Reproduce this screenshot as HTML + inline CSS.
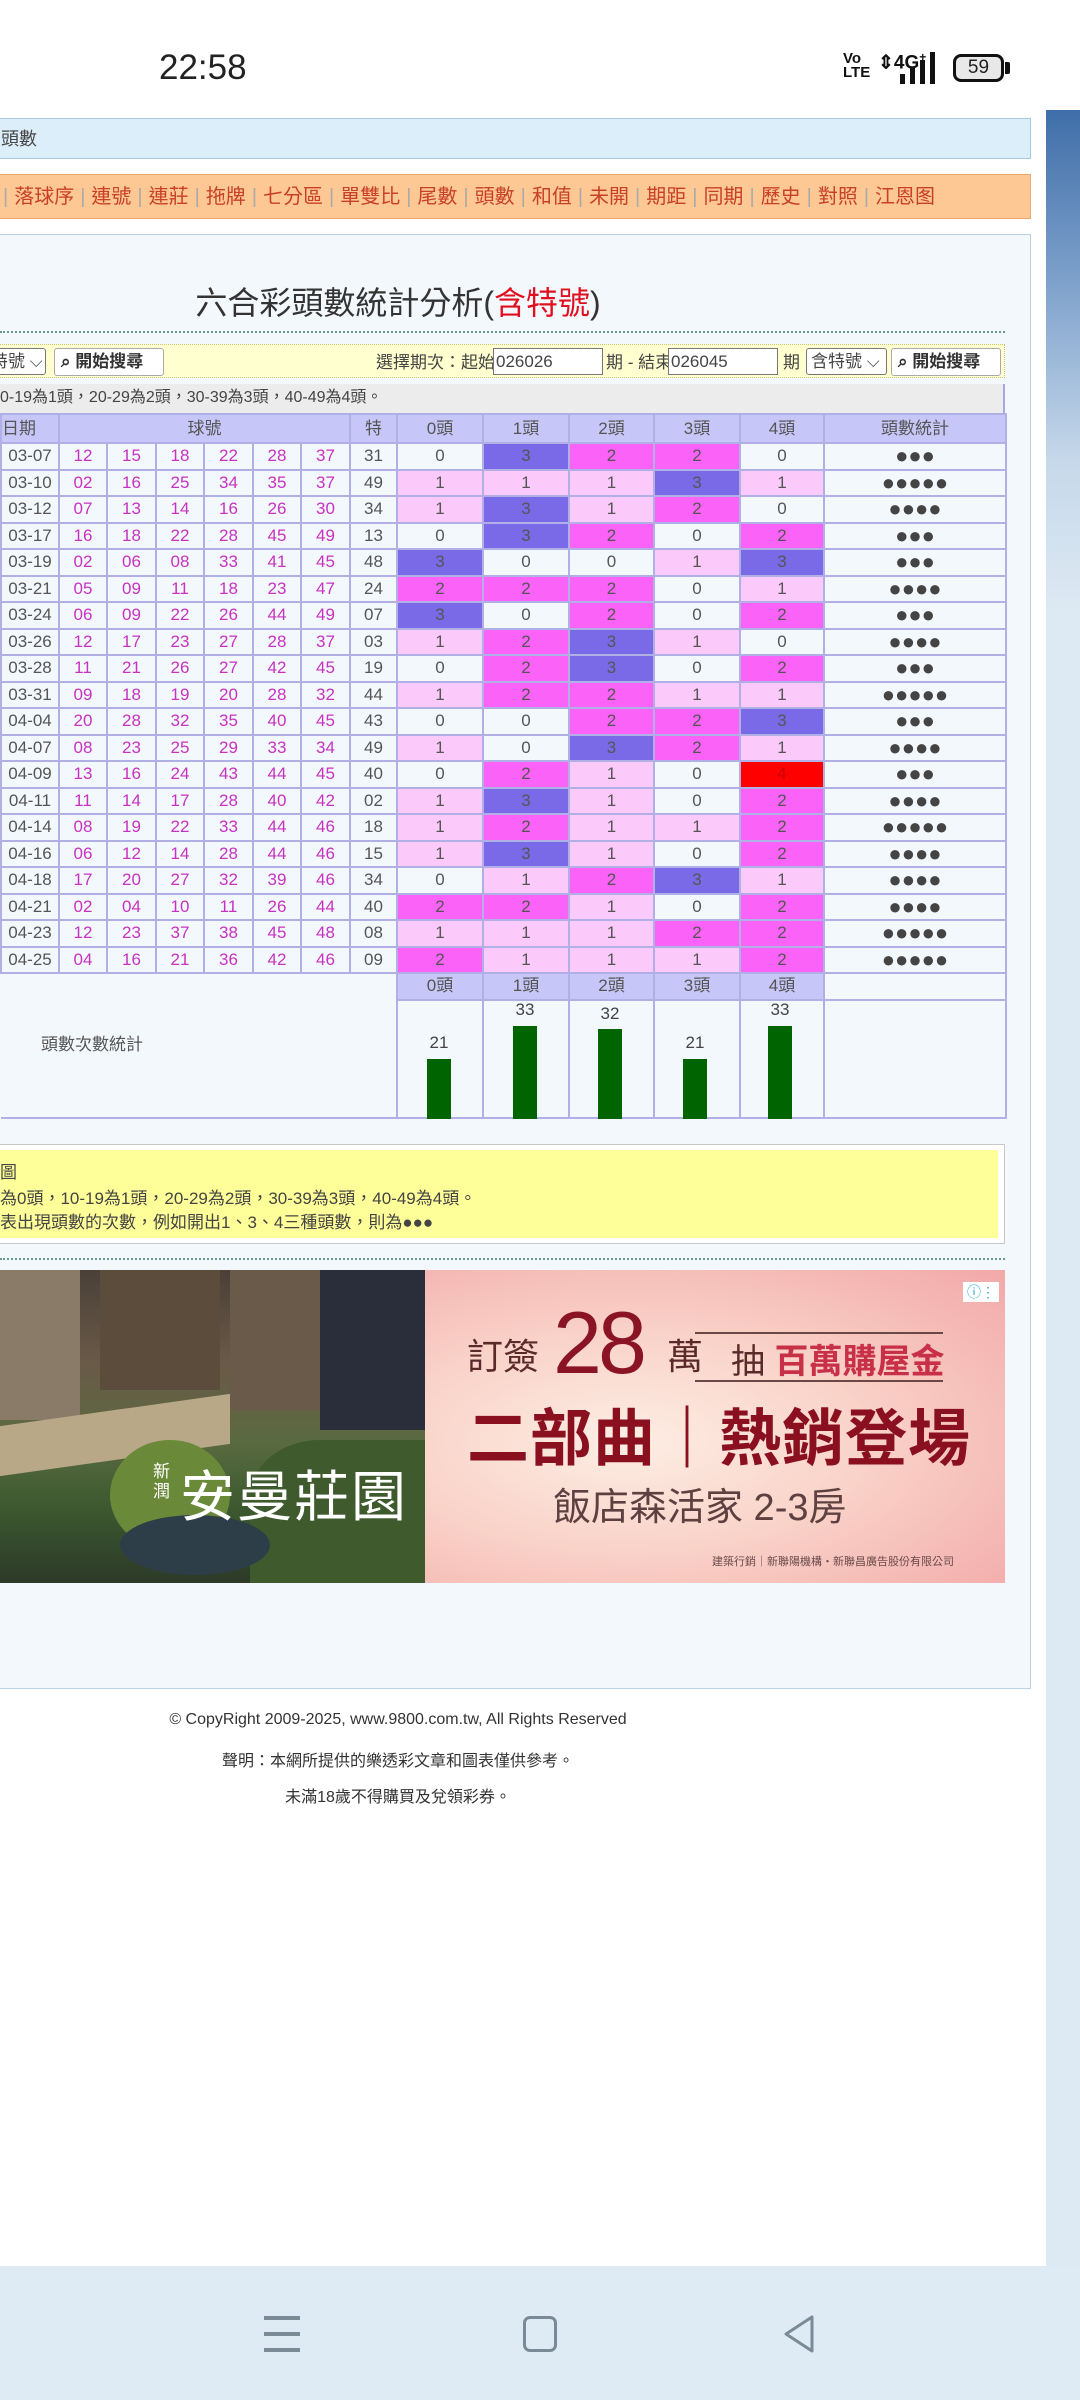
<!DOCTYPE html>
<html><head><meta charset="utf-8">
<style>
*{margin:0;padding:0;box-sizing:border-box}
body{width:1080px;height:2400px;position:relative;overflow:hidden;background:#fff;font-family:"Liberation Sans","Noto Sans CJK TC",sans-serif;color:#444}
.abs{position:absolute}
#side1{left:1046px;top:110px;width:34px;height:500px;background-image:linear-gradient(to bottom,#3f6ea8,#7fa2cc 35%,#c6d8ea 70%,#dde9f3)}
#side2{left:1046px;top:610px;width:34px;height:1656px;background-color:#dde9f3}
#topbar{left:-10px;top:118px;width:1041px;height:41px;background:#ddeefb;border:1px solid #a9c8e2;font-size:18px;line-height:40px;padding-left:10px;color:#444}
#nav{left:-10px;top:174px;width:1041px;height:45px;background:#fdc893;border:1px solid #eea66a;font-size:20px;line-height:44px;color:#c8402a;white-space:nowrap;padding-left:6px}
#nav span{color:#aaa;margin:0 6px}
#panel{left:-10px;top:234px;width:1041px;height:1455px;background:#f3f8fd;border:1px solid #bcd2e4}
#title{left:0;top:278px;width:796px;text-align:center;font-size:32px;color:#333}
#title b{color:#e01020;font-weight:normal}
.dot{height:0;border-top:2px dotted #6a9a8a;left:0;width:1005px}
#search{left:-5px;top:344px;width:1010px;height:34px;background:#ffffd0;border:1px dotted #c8c880;font-size:17px;color:#444}
.sel{position:absolute;top:3px;height:27px;border:1px solid #777;border-radius:3px;background:#fff;font-size:17px;line-height:25px;padding-left:4px}
.btn{position:absolute;top:3px;height:28px;border:1px solid #aaa;border-radius:3px;background:#fff;font-size:17px;line-height:26px;padding-left:6px;font-weight:bold;color:#333}
.inp{position:absolute;top:3px;height:27px;border:1px solid #777;background:#fff;font-size:17px;line-height:25px;padding-left:2px}
#info{left:0;top:384px;width:1005px;height:29px;background:#ececec;font-size:16px;line-height:28px;border-right:2px solid #a8a8e0}
table{position:absolute;left:0;top:413px;width:1005px;border-collapse:collapse;table-layout:fixed;font-size:17px}
td{border:2px solid #b0b0e6;text-align:center;height:26.5px;padding:0;line-height:22px;color:#555}
tr.h td{background:#c6c6f8;height:29px;color:#555}
td.b{color:#c832c0}
.c1{background:#fccafa}.c2{background:#fb62f8}.c3{background:#7a6ae8}.c5{background:#ff0000;color:#c00}
.dots{font-size:22px;color:#444;line-height:20px}
.bar{position:absolute;width:24px;background:#006400;bottom:0}
.bl{position:absolute;font-size:17px;width:60px;text-align:center;color:#444}
#note{left:-5px;top:1144px;width:1010px;height:100px;border:1px solid #c8c8c8;background:#fff}
#noteIn{left:0;top:1150px;width:998px;height:88px;background:#ffff99;font-size:17px;color:#444}
#ad{left:0;top:1270px;width:1005px;height:313px;overflow:hidden}
#photo{left:0;top:0;width:425px;height:313px;background:linear-gradient(180deg,#4a4038 0%,#6a5a48 30%,#5a6a40 55%,#3d5a30 75%,#2c3a28 100%)}
#pink{left:425px;top:0;width:580px;height:313px;background:radial-gradient(ellipse at 35% 55%,#fdeee4 0%,#f9d2c8 45%,#f2a8a8 100%)}
.ft{left:0;width:796px;text-align:center;font-size:16px;color:#333}
#bottom{left:0;top:2266px;width:1080px;height:134px;background:#dfebf4}
</style></head><body>
<div class="abs" style="left:159px;top:48px;font-size:35px;color:#222">22:58</div>
<div class="abs" style="left:843px;top:52px;font-size:15px;font-weight:bold;line-height:14px;color:#111">Vo<br>LTE</div>
<div class="abs" style="left:878px;top:50px;font-size:19px;font-weight:bold;color:#111">⇕4G<sup style="font-size:12px">+</sup></div>
<svg class="abs" style="left:898px;top:50px" width="42" height="36"><rect x="2" y="24" width="5" height="10" fill="#111"/><rect x="12" y="18" width="5" height="16" fill="#111"/><rect x="22" y="10" width="5" height="24" fill="#111"/><rect x="32" y="2" width="5" height="32" fill="#111"/></svg>
<div class="abs" style="left:953px;top:54px;width:51px;height:28px;border:3px solid #111;border-radius:8px;background:#e8e8e8;font-size:19px;text-align:center;line-height:22px;color:#222">59</div>
<div class="abs" style="left:1005px;top:62px;width:5px;height:12px;background:#111;border-radius:0 2px 2px 0"></div>

<div class="abs" id="side1"></div>
<div class="abs" id="side2"></div>
<div class="abs" id="topbar">頭數</div>
<div class="abs" id="nav"><span>|</span>落球序<span>|</span>連號<span>|</span>連莊<span>|</span>拖牌<span>|</span>七分區<span>|</span>單雙比<span>|</span>尾數<span>|</span>頭數<span>|</span>和值<span>|</span>未開<span>|</span>期距<span>|</span>同期<span>|</span>歷史<span>|</span>對照<span>|</span>江恩图</div>
<div class="abs" id="panel"></div>
<div class="abs" id="title">六合彩頭數統計分析(<b>含特號</b>)</div>
<div class="abs dot" style="top:331px"></div>
<div class="abs" id="search">
<div class="sel" style="left:-10px;width:60px">特號 ⌵</div>
<div class="btn" style="left:58px;width:110px">⌕ 開始搜尋</div>
<div class="abs" style="left:380px;top:3px">選擇期次：起始</div>
<div class="inp" style="left:497px;width:110px">026026</div>
<div class="abs" style="left:610px;top:3px">期 - 結束</div>
<div class="inp" style="left:672px;width:110px">026045</div>
<div class="abs" style="left:787px;top:3px">期</div>
<div class="sel" style="left:810px;width:81px">含特號 ⌵</div>
<div class="btn" style="left:895px;width:110px">⌕ 開始搜尋</div>
</div>
<div class="abs" id="info">0-19為1頭，20-29為2頭，30-39為3頭，40-49為4頭。</div>
<table>
<colgroup><col style="width:58px"><col style="width:48px"><col style="width:49px"><col style="width:48px"><col style="width:49px"><col style="width:48px"><col style="width:49px"><col style="width:47px"><col style="width:86px"><col style="width:86px"><col style="width:85px"><col style="width:86px"><col style="width:84px"><col style="width:182px"></colgroup>
<tr class="h"><td style="text-align:left">日期</td><td colspan="6">球號</td><td>特</td><td>0頭</td><td>1頭</td><td>2頭</td><td>3頭</td><td>4頭</td><td>頭數統計</td></tr>
<tr><td>03-07</td><td class="b">12</td><td class="b">15</td><td class="b">18</td><td class="b">22</td><td class="b">28</td><td class="b">37</td><td>31</td><td>0</td><td class="c3">3</td><td class="c2">2</td><td class="c2">2</td><td>0</td><td class="dots">●●●</td></tr>
<tr><td>03-10</td><td class="b">02</td><td class="b">16</td><td class="b">25</td><td class="b">34</td><td class="b">35</td><td class="b">37</td><td>49</td><td class="c1">1</td><td class="c1">1</td><td class="c1">1</td><td class="c3">3</td><td class="c1">1</td><td class="dots">●●●●●</td></tr>
<tr><td>03-12</td><td class="b">07</td><td class="b">13</td><td class="b">14</td><td class="b">16</td><td class="b">26</td><td class="b">30</td><td>34</td><td class="c1">1</td><td class="c3">3</td><td class="c1">1</td><td class="c2">2</td><td>0</td><td class="dots">●●●●</td></tr>
<tr><td>03-17</td><td class="b">16</td><td class="b">18</td><td class="b">22</td><td class="b">28</td><td class="b">45</td><td class="b">49</td><td>13</td><td>0</td><td class="c3">3</td><td class="c2">2</td><td>0</td><td class="c2">2</td><td class="dots">●●●</td></tr>
<tr><td>03-19</td><td class="b">02</td><td class="b">06</td><td class="b">08</td><td class="b">33</td><td class="b">41</td><td class="b">45</td><td>48</td><td class="c3">3</td><td>0</td><td>0</td><td class="c1">1</td><td class="c3">3</td><td class="dots">●●●</td></tr>
<tr><td>03-21</td><td class="b">05</td><td class="b">09</td><td class="b">11</td><td class="b">18</td><td class="b">23</td><td class="b">47</td><td>24</td><td class="c2">2</td><td class="c2">2</td><td class="c2">2</td><td>0</td><td class="c1">1</td><td class="dots">●●●●</td></tr>
<tr><td>03-24</td><td class="b">06</td><td class="b">09</td><td class="b">22</td><td class="b">26</td><td class="b">44</td><td class="b">49</td><td>07</td><td class="c3">3</td><td>0</td><td class="c2">2</td><td>0</td><td class="c2">2</td><td class="dots">●●●</td></tr>
<tr><td>03-26</td><td class="b">12</td><td class="b">17</td><td class="b">23</td><td class="b">27</td><td class="b">28</td><td class="b">37</td><td>03</td><td class="c1">1</td><td class="c2">2</td><td class="c3">3</td><td class="c1">1</td><td>0</td><td class="dots">●●●●</td></tr>
<tr><td>03-28</td><td class="b">11</td><td class="b">21</td><td class="b">26</td><td class="b">27</td><td class="b">42</td><td class="b">45</td><td>19</td><td>0</td><td class="c2">2</td><td class="c3">3</td><td>0</td><td class="c2">2</td><td class="dots">●●●</td></tr>
<tr><td>03-31</td><td class="b">09</td><td class="b">18</td><td class="b">19</td><td class="b">20</td><td class="b">28</td><td class="b">32</td><td>44</td><td class="c1">1</td><td class="c2">2</td><td class="c2">2</td><td class="c1">1</td><td class="c1">1</td><td class="dots">●●●●●</td></tr>
<tr><td>04-04</td><td class="b">20</td><td class="b">28</td><td class="b">32</td><td class="b">35</td><td class="b">40</td><td class="b">45</td><td>43</td><td>0</td><td>0</td><td class="c2">2</td><td class="c2">2</td><td class="c3">3</td><td class="dots">●●●</td></tr>
<tr><td>04-07</td><td class="b">08</td><td class="b">23</td><td class="b">25</td><td class="b">29</td><td class="b">33</td><td class="b">34</td><td>49</td><td class="c1">1</td><td>0</td><td class="c3">3</td><td class="c2">2</td><td class="c1">1</td><td class="dots">●●●●</td></tr>
<tr><td>04-09</td><td class="b">13</td><td class="b">16</td><td class="b">24</td><td class="b">43</td><td class="b">44</td><td class="b">45</td><td>40</td><td>0</td><td class="c2">2</td><td class="c1">1</td><td>0</td><td class="c5">4</td><td class="dots">●●●</td></tr>
<tr><td>04-11</td><td class="b">11</td><td class="b">14</td><td class="b">17</td><td class="b">28</td><td class="b">40</td><td class="b">42</td><td>02</td><td class="c1">1</td><td class="c3">3</td><td class="c1">1</td><td>0</td><td class="c2">2</td><td class="dots">●●●●</td></tr>
<tr><td>04-14</td><td class="b">08</td><td class="b">19</td><td class="b">22</td><td class="b">33</td><td class="b">44</td><td class="b">46</td><td>18</td><td class="c1">1</td><td class="c2">2</td><td class="c1">1</td><td class="c1">1</td><td class="c2">2</td><td class="dots">●●●●●</td></tr>
<tr><td>04-16</td><td class="b">06</td><td class="b">12</td><td class="b">14</td><td class="b">28</td><td class="b">44</td><td class="b">46</td><td>15</td><td class="c1">1</td><td class="c3">3</td><td class="c1">1</td><td>0</td><td class="c2">2</td><td class="dots">●●●●</td></tr>
<tr><td>04-18</td><td class="b">17</td><td class="b">20</td><td class="b">27</td><td class="b">32</td><td class="b">39</td><td class="b">46</td><td>34</td><td>0</td><td class="c1">1</td><td class="c2">2</td><td class="c3">3</td><td class="c1">1</td><td class="dots">●●●●</td></tr>
<tr><td>04-21</td><td class="b">02</td><td class="b">04</td><td class="b">10</td><td class="b">11</td><td class="b">26</td><td class="b">44</td><td>40</td><td class="c2">2</td><td class="c2">2</td><td class="c1">1</td><td>0</td><td class="c2">2</td><td class="dots">●●●●</td></tr>
<tr><td>04-23</td><td class="b">12</td><td class="b">23</td><td class="b">37</td><td class="b">38</td><td class="b">45</td><td class="b">48</td><td>08</td><td class="c1">1</td><td class="c1">1</td><td class="c1">1</td><td class="c2">2</td><td class="c2">2</td><td class="dots">●●●●●</td></tr>
<tr><td>04-25</td><td class="b">04</td><td class="b">16</td><td class="b">21</td><td class="b">36</td><td class="b">42</td><td class="b">46</td><td>09</td><td class="c2">2</td><td class="c1">1</td><td class="c1">1</td><td class="c1">1</td><td class="c2">2</td><td class="dots">●●●●●</td></tr>
<tr><td colspan="8" rowspan="2" style="border-left:none;text-align:left;padding-left:40px;padding-top:0">頭數次數統計</td><td style="background:#c6c6f8">0頭</td><td style="background:#c6c6f8">1頭</td><td style="background:#c6c6f8">2頭</td><td style="background:#c6c6f8">3頭</td><td style="background:#c6c6f8">4頭</td><td></td></tr>
<tr><td style="height:118px"></td><td></td><td></td><td></td><td></td><td></td></tr>
</table>
<div class="bar abs" style="left:427px;top:1059px;height:60px"></div><div class="bl" style="left:409px;top:1033px">21</div>
<div class="bar abs" style="left:513px;top:1026px;height:93px"></div><div class="bl" style="left:495px;top:1000px">33</div>
<div class="bar abs" style="left:598px;top:1029px;height:90px"></div><div class="bl" style="left:580px;top:1004px">32</div>
<div class="bar abs" style="left:683px;top:1059px;height:60px"></div><div class="bl" style="left:665px;top:1033px">21</div>
<div class="bar abs" style="left:768px;top:1026px;height:93px"></div><div class="bl" style="left:750px;top:1000px">33</div>

<div class="abs" id="note"></div>
<div class="abs" id="noteIn">
<div class="abs" style="left:0;top:8px">圖</div>
<div class="abs" style="left:0;top:34px">為0頭，10-19為1頭，20-29為2頭，30-39為3頭，40-49為4頭。</div>
<div class="abs" style="left:0;top:58px">表出現頭數的次數，例如開出1、3、4三種頭數，則為●●●</div>
</div>
<div class="abs dot" style="top:1258px"></div>

<div class="abs" id="ad">
<div class="abs" id="photo">
<div class="abs" style="left:0;top:0;width:80px;height:150px;background:#8a7a68"></div>
<div class="abs" style="left:100px;top:0;width:120px;height:120px;background:#5c4c3c"></div>
<div class="abs" style="left:230px;top:0;width:90px;height:140px;background:#6a5a4a"></div>
<div class="abs" style="left:320px;top:0;width:105px;height:160px;background:#2a2e3a"></div>
<div class="abs" style="left:0;top:140px;width:230px;height:50px;background:#b8a888;transform:skewY(-8deg)"></div>
<div class="abs" style="left:110px;top:170px;width:120px;height:110px;border-radius:50%;background:#6a8a3a"></div>
<div class="abs" style="left:250px;top:170px;width:175px;height:143px;border-radius:40% 0 0 0;background:#3f5a2c"></div>
<div class="abs" style="left:120px;top:245px;width:150px;height:60px;border-radius:50%;background:#2e3e48"></div>
<div class="abs" style="left:153px;top:192px;width:20px;font-size:17px;line-height:20px;color:#fff">新潤</div>
<div class="abs" style="left:180px;top:182px;font-size:55px;color:#fff;letter-spacing:2px">安曼莊園</div>
</div>
<div class="abs" id="pink">
<div class="abs" style="left:42px;top:58px;font-size:36px;color:#5a2a2a">訂簽</div>
<div class="abs" style="left:128px;top:22px;font-size:88px;color:#8a1424;letter-spacing:-4px">28</div>
<div class="abs" style="left:242px;top:58px;font-size:36px;color:#5a2a2a">萬</div>
<div class="abs" style="left:270px;top:62px;width:248px;height:50px;border-top:2px solid #6a4848;border-bottom:2px solid #6a4848"></div>
<div class="abs" style="left:306px;top:64px;font-size:34px;color:#5a2a2a">抽 <span style="color:#c83048;font-weight:bold">百萬購屋金</span></div>
<div class="abs" style="left:42px;top:118px;font-size:62px;color:#8a1020;font-weight:bold;letter-spacing:1px">二部曲｜熱銷登場</div>
<div class="abs" style="left:128px;top:206px;font-size:38px;color:#5e4040">飯店森活家 2-3房</div>
<div class="abs" style="left:287px;top:283px;font-size:11px;color:#6a4a4a">建築行銷｜新聯陽機構‧新聯昌廣告股份有限公司</div>
<div class="abs" style="left:538px;top:12px;width:36px;height:20px;background:#fff;font-size:14px;color:#2aa0d8;line-height:20px;text-align:center">ⓘ⋮</div>
</div>
</div>

<div class="abs ft" style="top:1711px">© CopyRight 2009-2025, www.9800.com.tw, All Rights Reserved</div>
<div class="abs ft" style="top:1747px">聲明：本網所提供的樂透彩文章和圖表僅供參考。</div>
<div class="abs ft" style="top:1783px">未滿18歲不得購買及兌領彩券。</div>

<div class="abs" id="bottom">
<div class="abs" style="left:264px;top:50px;width:36px;height:4px;background:#7a8a96"></div>
<div class="abs" style="left:264px;top:66px;width:36px;height:4px;background:#7a8a96"></div>
<div class="abs" style="left:264px;top:82px;width:36px;height:4px;background:#7a8a96"></div>
<div class="abs" style="left:523px;top:50px;width:34px;height:36px;border:3px solid #7a8a96;border-radius:7px"></div>
<svg class="abs" style="left:778px;top:48px" width="40" height="40"><path d="M34 3 L34 37 L8 20 Z" fill="none" stroke="#7a8a96" stroke-width="3" stroke-linejoin="round"/></svg>
</div>
</body></html>
